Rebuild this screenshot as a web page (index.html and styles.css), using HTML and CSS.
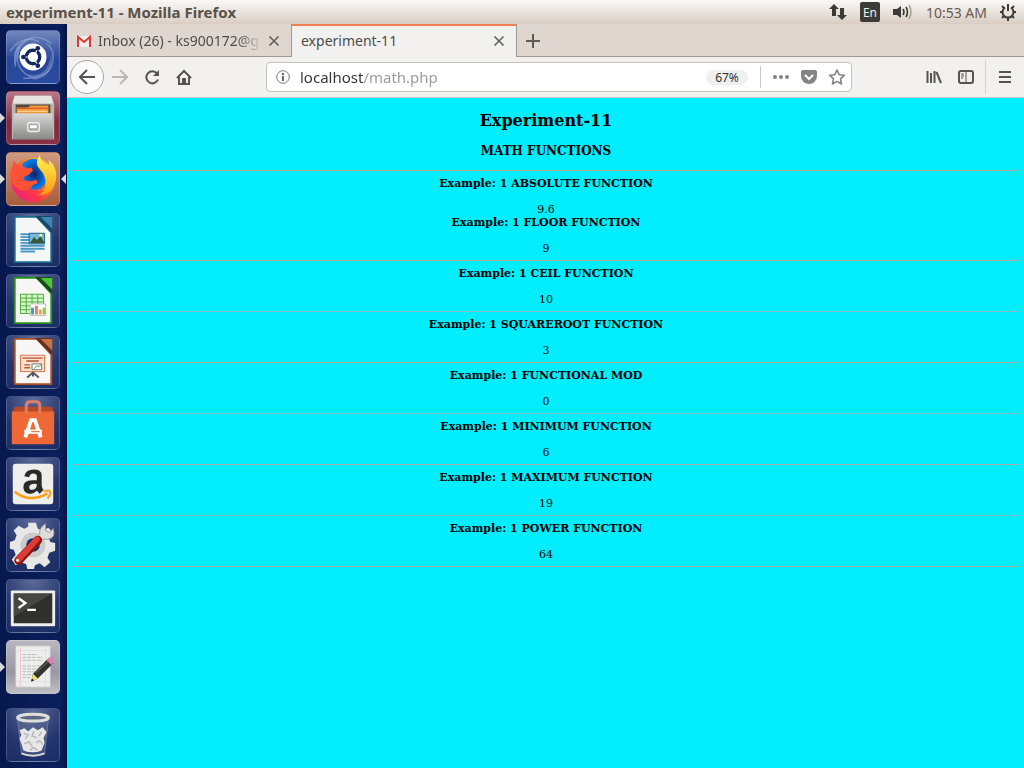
FILE: index.html
```html
<!DOCTYPE html>
<html lang="en">
<head>
<meta charset="utf-8">
<title>experiment-11 - Mozilla Firefox</title>
<link rel="stylesheet" href="styles.css">
</head>
<body>
<header class="panel">
  <span class="panel-title">experiment-11 - Mozilla Firefox</span>
  <div class="tray">
    <button class="plain" aria-label="Network"><svg width="18" height="18" viewBox="0 0 18 18" fill="#3c3b37"><path d="M5 1 10 6H7v7H3V6H0zM11 5h4v7h3l-5 5-5-5h3z"/></svg></button>
    <button class="lang">En</button>
    <button class="plain" aria-label="Volume"><svg width="20" height="18" viewBox="0 0 20 18" fill="none"><path d="M0 6h4l4-3v12l-4-3H0z" fill="#3c3b37"/><path d="M10 6q2 3 0 6M13 4q3 5 0 10" stroke="#3c3b37" stroke-width="1.6"/><path d="M16 2q4 7 0 14" stroke="#aaa39a" stroke-width="1.6"/></svg></button>
    <button class="clock">10:53 AM</button>
    <button class="plain" aria-label="System"><svg width="16" height="18" viewBox="0 0 16 18" fill="none" stroke="#3c3b37"><path d="M5 4.500a5.500 5.500 0 1 0 6 0" stroke-width="2"/><path d="M8 1v7M0 9h3M13 9h3M8 15v3M2 3l2 2M14 3l-2 2M2 15l2-2M14 15l-2-2" stroke-width="2"/></svg></button>
  </div>
</header>
<div class="desktop">
  <nav class="launcher" aria-label="Launcher">
    <button class="tile dash" aria-label="Search your computer"><svg viewBox="0 0 54 54"><g fill="none" stroke="#9db2dc" stroke-opacity=".55" stroke-width="1.5"><path d="M9 37Q4 14 26 7q10-2 20 6"/><path d="M17 49Q48 50 48 27q0-9-7-14M13 16Q5 38 25 48M3 21Q16 3 33 11"/></g><path d="M8 36Q4 10 29 7q-16 5-17 20zM21 45q21 5 25-22 4 24-18 28z" fill="#91a7d5" fill-opacity=".4"/><circle cx="27" cy="27" r="14" fill="#fff"/><circle cx="27" cy="27" r="7" fill="none" stroke="#142960" stroke-width="3.5"/><g stroke="#fff" stroke-width="1.2"><path d="M27 27H16M27 27l6-10M27 27l6 10"/></g><circle cx="27" cy="27" r="5" fill="#fff"/><g fill="#142960"><circle cx="17" cy="27" r="2.4"/><circle cx="32" cy="18" r="2.4"/><circle cx="32" cy="36" r="2.4"/></g></svg></button>
    <button class="tile files running" aria-label="Files"><svg viewBox="0 0 54 54"><defs><linearGradient id="steel" x2="0" y2="1"><stop stop-color="#d8d8d6"/><stop offset="1" stop-color="#898987"/></linearGradient></defs><path d="M8 4h38l3 9v36H5V13z" fill="#b8b6b4"/><path d="M8 4h38l2 8H6z" fill="#e7e5e2"/><path d="M9 13h36v12H9z" fill="#504840"/><path d="M10 16h12l2-2h19v9H10z" fill="#ef9a3c"/><path d="M10 17h33" stroke="#e2592a" stroke-width="1.500"/><path d="M11 20h31" stroke="#ffe0a0"/><path d="M7 22h40l1 27H6z" fill="url(#steel)"/><rect x="21.500" y="32" width="12" height="9" rx="2" fill="#aaa" stroke="#eee" stroke-width="1.500"/><path d="M24 36h7" stroke="#fff" stroke-width="3"/></svg></button>
    <button class="tile firefox running active" aria-label="Firefox"><svg viewBox="0 0 54 54"><defs><linearGradient id="fox" x1="0" y1="1" x2="1" y2="0"><stop stop-color="#e7179b"/><stop offset=".35" stop-color="#ff3548"/><stop offset=".65" stop-color="#ff8a18"/><stop offset="1" stop-color="#fff34a"/></linearGradient><radialGradient id="globe"><stop stop-color="#10236e"/><stop offset="1" stop-color="#087ee9"/></radialGradient><linearGradient id="flame" x2="0" y2="1"><stop stop-color="#fff44f"/><stop offset="1" stop-color="#ff9a16"/></linearGradient></defs><circle cx="27" cy="28" r="23" fill="url(#fox)"/><path d="M16 11Q30 0 40 13l1 16q-4 10-14 9-9-2-10-10z" fill="url(#globe)"/><path d="M5 16l2-8 6 7q6-2 8 1l4-1 2 3-5 5q-5 1-6 4 7 4 13 1 4 1 2 4-4 0-6 4-5 5-13 2-8-5-8-12Q2 22 5 16z" fill="#ff5134"/><path d="M34 2q-6 9 0 15 7 7 6 16-1 8-8 11 12 0 17-10 5-11-1-22l-5-5q1 5 1 6Q35 10 34 2z" fill="url(#flame)"/></svg></button>
    <button class="tile writer" aria-label="LibreOffice Writer"><svg viewBox="0 0 54 54"><path d="M8 3h23l15 16v31H8z" fill="#f5f6f6" stroke="#17688c" stroke-width="2"/><path d="M29 2h18v18z" fill="#17496c"/><path d="M35 3h12v12z" fill="#3c86b3"/><path d="M14 21h25M14 24h25M14 27h25M14 30h25M14 33h25M14 36h25M14 39h15" stroke="#4799c4" stroke-width="2"/><path d="M23 20h16v11H23z" fill="#79b7dd" stroke="#1d638a"/><path d="M24 30l4-6 3 3 4-4 4 7z" fill="#375a36"/><circle cx="35" cy="22" r="1.500" fill="#fff15c"/></svg></button>
    <button class="tile calc" aria-label="LibreOffice Calc"><svg viewBox="0 0 54 54"><path d="M8 3h23l15 16v31H8z" fill="#f7f8f6" stroke="#259018" stroke-width="2"/><path d="M29 2h18v18z" fill="#18491e"/><path d="M35 3h12v12z" fill="#4fc435"/><path d="M14 20h24v20H14z" fill="#d9f8c9" stroke="#47ac37"/><path d="M14 24h24M14 28h24M14 32h24M14 36h24M20 20v20M26 20v20M32 20v20" stroke="#47ac37"/><path d="M24 30h16v12H24z" fill="#fff" stroke="#bbb"/><path d="M25 34h3v7h-3z" fill="#4794c7"/><path d="M29 32h3v9h-3z" fill="#df8065"/><path d="M33 36h3v5h-3z" fill="#f4a02b"/><path d="M37 34h3v7h-3z" fill="#91c75b"/></svg></button>
    <button class="tile impress" aria-label="LibreOffice Impress"><svg viewBox="0 0 54 54"><path d="M8 3h23l15 16v31H8z" fill="#f8f7f6" stroke="#a84e23" stroke-width="2"/><path d="M29 2h18v18z" fill="#65301f"/><path d="M35 3h12v12z" fill="#cc7046"/><path d="M14 20h25v17H14z" fill="#f9e0d0" stroke="#d57348"/><path d="M16 23h21M20 26h13M18 30h6M18 33h6" stroke="#b95330" stroke-width="1.5"/><path d="M26 29h10v6H26z" fill="#fff" stroke="#777"/><path d="M28 34l3-3 2 1 3-3" fill="none" stroke="#39a640"/><path d="M27 37v5M27 38l-6 5M27 38l6 5" fill="none" stroke="#555" stroke-width="2"/></svg></button>
    <button class="tile software" aria-label="Ubuntu Software"><svg viewBox="0 0 54 54"><path d="M8 10h39l2 8H5z" fill="#b84a27"/><path d="M5 15h44v34H5z" fill="#ee6935"/><path d="M20 17V9q0-4 4-4h6q4 0 4 4v8" fill="none" stroke="#dd806a" stroke-width="3"/><path d="M19 42 25 24h4l6 18M20 36h16" fill="none" stroke="#fff" stroke-width="4"/><path d="M18 34h18v4H18z" fill="#fff"/><path d="M25 36h9" stroke="#df5b2d"/></svg></button>
    <button class="tile amazon" aria-label="Amazon"><svg viewBox="0 0 54 54"><rect x="6" y="6" width="42" height="42" rx="3" fill="#eeeeec"/><path d="M31 23v-4q0-3-4-3-3 0-4 4l-5-1q1-7 10-7 8 0 8 6v10q0 3 2 5l-4 4-3-3q-4 4-8 3-6-1-6-7 0-7 9-7zm0 4q-7-1-8 3 0 3 3 3 5 0 5-6z" fill="#292929"/><path d="M8 35q15 12 34 2" fill="none" stroke="#ff9f17" stroke-width="2.500"/><path d="M38 35q7-3 7 1 0 3-3 6" fill="none" stroke="#ff9f17" stroke-width="2"/></svg></button>
    <button class="tile settings" aria-label="System Settings"><svg viewBox="0 0 54 54"><path d="M22 4h8l2 6 5 2 6-3 4 5-4 5 2 5 5 1v8l-6 2-2 5 3 5-6 5-5-4-5 2-1 4h-7l-1-5-5-2-6 3-4-6 4-5-2-5-4-1v-7l5-2 2-5-3-5 5-5 6 3 4-2z" fill="#e7e7e5"/><circle cx="27" cy="27" r="13" fill="#c9cbcd"/><circle cx="27" cy="27" r="7" fill="#172965"/><path d="M29 22l5-6q-1-7 6-11v7l4 2 4-4q3 10-6 11h-5l-4 5z" fill="#deddd9" stroke="#999"/><path d="M12 43 32 22" stroke="#8f1711" stroke-width="9" stroke-linecap="round"/><path d="M12 42 31 21" stroke="#dd3d35" stroke-width="6" stroke-linecap="round"/><circle cx="11" cy="43" r="1.500" fill="#eee"/></svg></button>
    <button class="tile terminal" aria-label="Terminal"><svg viewBox="0 0 54 54"><rect x="4" y="11" width="46" height="37" rx="1" fill="#eeeeec"/><path d="M7 14h40v31H7z" fill="#30302f"/><path d="M7 14h40L7 38z" fill="#464645"/><path d="M12 19l7 5-7 5M21 31h9" fill="none" stroke="#fff" stroke-width="2.500"/></svg></button>
    <button class="tile editor running" aria-label="Text Editor"><svg viewBox="0 0 54 54"><path d="M9 5h36v43H9z" fill="#eeeeed" stroke="#c2c1c4"/><path d="M14 6v41" stroke="#efc3c8"/><path d="M40 6v41M10 10h34M10 42h34" stroke="#d5e0e8"/><path d="M16 14h16M16 17h21M16 20h21M16 26h21M16 29h20M16 32h21M16 35h10M16 38h8" stroke="#b8b8b8" stroke-dasharray="4 1"/><path d="M25 42l2-8L43 18l5 5-16 16z" fill="#333"/><path d="M41 20l3-3q4-1 5 4l-3 4z" fill="#d884b3"/><path d="M25 42l2-8 5 5z" fill="#f1df76"/><path d="M25 42l1-3 2 2z" fill="#111"/><path d="M30 33l13-12" stroke="#777"/></svg></button>
    <button class="tile trash" aria-label="Trash"><svg viewBox="0 0 54 54"><path d="M11 10h32l-4 36q-12 5-24 0z" fill="#7682a2" fill-opacity=".35" stroke="#6f7a9c"/><path d="M13 22l5-2 4 3 5-4 5 3 5-3 4 5-3 6 1 5-3 8q-9 4-19 0l-2-7-2-5 2-4z" fill="#e7e7e7"/><path d="M17 25l5 2-3 4M28 23l-2 5 5 2M36 24l-3 4M18 36l5-2 3 5M30 35l4-2 3 4M24 43l3-3 5 3" fill="none" stroke="#b4b6ba" stroke-width="1.500"/><ellipse cx="27" cy="9" rx="16" ry="3.500" fill="#5c6784" stroke="#dededa" stroke-width="3"/><path d="M15 46q12 5 24 0" fill="none" stroke="#ddd" stroke-width="2"/></svg></button>
  </nav>
  <main class="browser">
    <div class="tabs">
      <div class="tab inbox">
        <svg width="16" height="16" viewBox="0 0 16 16"><path d="M1 3h14v11H1z" fill="#eee"/><path d="M2 14V4l6 5 6-5v10" fill="none" stroke="#d83d35" stroke-width="2"/></svg>
        <button class="tab-name fade">Inbox (26) - ks900172@g</button>
        <button class="plain close" aria-label="Close Inbox"><svg width="12" height="12" viewBox="0 0 12 12"><path d="M1.500 1.500l9 9M10.500 1.500l-9 9" stroke="#5d5b58" stroke-width="1.500"/></svg></button>
      </div>
      <div class="tab current">
        <button class="tab-name">experiment-11</button>
        <button class="plain close" aria-label="Close experiment-11"><svg width="12" height="12" viewBox="0 0 12 12"><path d="M1.500 1.500l9 9M10.500 1.500l-9 9" stroke="#5d5b58" stroke-width="1.500"/></svg></button>
      </div>
      <button class="plain new-tab" aria-label="New tab"><svg width="14" height="14" viewBox="0 0 14 14"><path d="M7 0v14M0 7h14" stroke="#5d5b58" stroke-width="2"/></svg></button>
    </div>
    <div class="toolbar">
      <div class="history">
        <button class="plain back" aria-label="Back"><svg width="16" height="16" viewBox="0 0 16 16" fill="none" stroke="#555451" stroke-width="2"><path d="M1 8h15M8 1 1 8l7 7"/></svg></button>
        <button class="plain" aria-label="Forward"><svg width="16" height="16" viewBox="0 0 16 16" fill="none" stroke="#b9b7b4" stroke-width="2"><path d="M0 8h15M8 1l7 7-7 7"/></svg></button>
        <button class="plain" aria-label="Reload"><svg width="16" height="16" viewBox="0 0 16 16"><path d="M13 4.500a6 6 0 1 0 1 6" fill="none" stroke="#555451" stroke-width="2"/><path d="M15 1v6H9z" fill="#555451"/></svg></button>
        <button class="plain" aria-label="Home"><svg width="16" height="16" viewBox="0 0 16 16"><path d="M1 9l7-7 7 7M3 8v7h10V8" fill="none" stroke="#555451" stroke-width="2"/><path d="M6 9h4v6H6z" fill="#555451"/></svg></button>
      </div>
      <div class="address">
        <svg width="14" height="14" viewBox="0 0 14 14"><circle cx="7" cy="7" r="6.300" fill="none" stroke="#777"/><path d="M7 6v5M7 3v2" stroke="#666" stroke-width="2"/></svg>
        <input class="url" type="text" value="localhost/math.php" aria-label="Address">
        <button class="zoom">67%</button>
        <span class="rule"></span>
        <div class="actions">
          <button class="plain" aria-label="Page actions"><svg width="16" height="16" viewBox="0 0 16 16" fill="#838383"><circle cx="2" cy="8" r="2"/><circle cx="8" cy="8" r="2"/><circle cx="14" cy="8" r="2"/></svg></button>
          <button class="plain" aria-label="Save to Pocket"><svg width="16" height="16" viewBox="0 0 16 16"><path d="M2 1h12q2 0 2 2v4a8 8 0 0 1-16 0V3q0-2 2-2z" fill="#838383"/><path d="M4 6l4 4 4-4" fill="none" stroke="#fff" stroke-width="2"/></svg></button>
          <button class="plain" aria-label="Bookmark"><svg width="16" height="16" viewBox="0 0 16 16"><path d="M8 1l2.200 4.700 5 .6-3.700 3.500 1 5.200L8 12.400 3.500 15l1-5.200L.8 6.300l5-.6z" fill="none" stroke="#838383" stroke-width="1.600" stroke-linejoin="round"/></svg></button>
        </div>
      </div>
      <div class="tools">
        <button class="plain" aria-label="Library"><svg width="16" height="16" viewBox="0 0 16 16"><path d="M1.500 2v12M5 4v10M8.500 2v12M10.500 3l4.500 11" stroke="#555451" stroke-width="2"/></svg></button>
        <button class="plain" aria-label="Sidebar"><svg width="16" height="16" viewBox="0 0 16 16"><rect x="1" y="2" width="14" height="12" rx="2" fill="none" stroke="#555451" stroke-width="2"/><path d="M8 2v12M3 5h3M3 7h3M3 9h2" stroke="#555451"/></svg></button>
      </div>
      <button class="plain menu" aria-label="Menu"><svg width="12" height="14" viewBox="0 0 12 14"><path d="M0 2h12M0 7h12M0 12h12" stroke="#555451" stroke-width="2"/></svg></button>
    </div>
    <article class="page">
      <h1>Experiment-11</h1>
      <h2>MATH FUNCTIONS</h2>
      <hr>
      <section><h3>Example: 1 ABSOLUTE FUNCTION</h3><p>9.6</p></section>
      <section><h3>Example: 1 FLOOR FUNCTION</h3><p>9</p></section>
      <hr>
      <section><h3>Example: 1 CEIL FUNCTION</h3><p>10</p></section>
      <hr class="faint">
      <section><h3>Example: 1 SQUAREROOT FUNCTION</h3><p>3</p></section>
      <hr>
      <section><h3>Example: 1 FUNCTIONAL MOD</h3><p>0</p></section>
      <hr class="faint">
      <section><h3>Example: 1 MINIMUM FUNCTION</h3><p>6</p></section>
      <hr>
      <section><h3>Example: 1 MAXIMUM FUNCTION</h3><p>19</p></section>
      <hr class="faint">
      <section><h3>Example: 1 POWER FUNCTION</h3><p>64</p></section>
      <hr>
    </article>
  </main>
</div>
</body>
</html>
```
FILE: styles.css
```css
* { box-sizing: border-box; }
body {
  margin: 0;
  min-height: 100vh;
  display: flex;
  flex-direction: column;
  font-family: "Noto Sans", "Open Sans", sans-serif;
  font-size: 14px;
  color: #4c4c4c;
}
button, input { font: inherit; color: inherit; border: 0; padding: 0; background: none; }
svg { display: block; flex: none; }
.plain { display: grid; place-items: center; flex: none; }

.panel {
  height: 24px;
  padding: 0 8px 0 6px;
  display: flex;
  align-items: center;
  justify-content: space-between;
  background: linear-gradient(#faf9f7, #d9cdc3);
}
.panel-title { font-size: 15px; line-height: 20px; font-weight: 700; color: #5a5148; }
.tray { display: flex; align-items: center; gap: 13px; }
.lang { width: 20px; height: 20px; border-radius: 2px; background: #3c3b37; color: #f3efeb; font-size: 12px; }
.clock { color: #6a5a4c; }

.desktop { flex: 1; display: flex; }
.launcher {
  width: 67px;
  flex: none;
  padding: 6px;
  display: flex;
  flex-direction: column;
  gap: 7px;
  background: linear-gradient(90deg, #06184e, #0b1f5d 90%, #07133f);
}
.tile {
  position: relative;
  width: 54px;
  height: 54px;
  border-radius: 5px;
  border: 1px solid rgba(255, 255, 255, .18);
  background: radial-gradient(circle at 50% 0, #5c6b99, #25356d 60%, #1c2c66);
}
.tile svg { width: 52px; height: 52px; }
.dash { background: linear-gradient(#7187bc, #27479a 55%, #2b4ba0); }
.files { background: linear-gradient(#b87888, #80283e 60%, #8b3146); }
.firefox { background: linear-gradient(#cf9a80, #a75c3c); }
.editor { background: linear-gradient(#b8b7bf, #9997a1 60%, #c0bfc5); }
.trash { margin-top: auto; }
.running::before {
  content: "";
  position: absolute;
  left: -7px;
  top: 21px;
  border: 5px solid transparent;
  border-left-color: #dadbd9;
  border-right: 0;
}
.active::after {
  content: "";
  position: absolute;
  right: -7px;
  top: 21px;
  border: 5px solid transparent;
  border-right-color: #dadbd9;
  border-left: 0;
}

.browser { flex: 1; min-width: 0; display: flex; flex-direction: column; }
.tabs { display: flex; height: 33px; background: #dfd6d0; box-shadow: inset 0 -1px #9f9893; }
.tab { display: flex; align-items: center; width: 224px; padding: 0 11px 0 9px; }
.inbox { gap: 6px; }
.current { background: #f2f1f0; border: 1px solid #9f9893; border-width: 0 1px; box-shadow: inset 0 2px #f08054; width: 226px; }
.tab-name { flex: 1; min-width: 0; text-align: left; white-space: nowrap; }
.fade { mask-image: linear-gradient(90deg, #000 85%, transparent); }
.new-tab { width: 32px; }

.toolbar { height: 41px; display: flex; align-items: center; background: #f2f1f0; border-bottom: 1px solid #c9c5c1; }
.history { display: flex; align-items: center; gap: 16px; padding-left: 3px; }
.back { width: 34px; height: 34px; border: 1px solid #aaa7a3; border-radius: 50%; background: #fbfbfb; }
.back + .plain { margin-left: -8px; }
.address {
  flex: 1;
  height: 30px;
  margin-left: 74px;
  margin-right: 74px;
  padding: 0 6px 0 9px;
  display: flex;
  align-items: center;
  border: 1px solid #c5c1bc;
  border-radius: 4px;
  background: #fff;
}
.url {
  flex: 1;
  min-width: 0;
  margin-left: 10px;
  font-size: 15px;
  color: transparent;
  background: linear-gradient(90deg, #333 64px, #999 64px);
  -webkit-background-clip: text;
  background-clip: text;
}
.zoom { width: 42px; height: 15px; line-height: 15px; border-radius: 8px; background: #f0f0f0; font-size: 12px; color: #333; }
.rule { width: 1px; height: 22px; margin: 0 12px; background: #c9c9c9; }
.actions { display: flex; gap: 12px; }
.tools { display: flex; gap: 16px; padding-right: 11px; }
.menu { width: 39px; height: 34px; border-left: 1px solid #d4d1ce; }

.page {
  flex: 1;
  padding: 13px 5px 0 6px;
  background: #00eeff;
  color: #000;
  font-family: "DejaVu Serif", serif;
  font-size: 11px;
  line-height: 13px;
  text-align: center;
}
.page h1 { margin: 0 0 14px; font-size: 16px; line-height: 19px; }
.page h2 { margin: 0 0 11px; font-size: 12px; line-height: 15px; }
.page h3 { margin: 0 0 13px; font-size: inherit; }
.page p { margin: 0; }
.page hr { height: 1px; margin: 5px 0 6px; border: 0; background: #b0acac; }
.page .faint { background: #88bcc4; }
```
